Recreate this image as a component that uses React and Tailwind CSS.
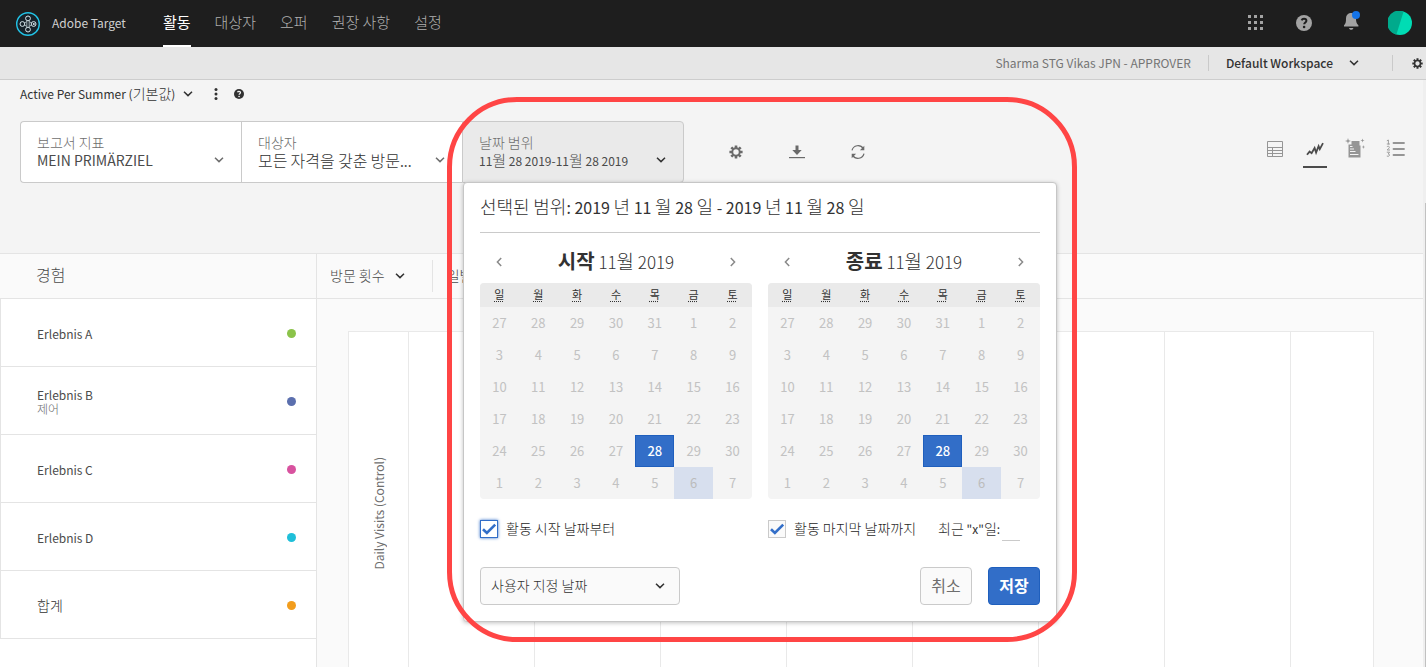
import { useState } from "react";

const NAV = ["활동", "대상자", "오퍼", "권장 사항", "설정"];
const WEEKDAYS = [
  ["일", "일요일"],
  ["월", "월요일"],
  ["화", "화요일"],
  ["수", "수요일"],
  ["목", "목요일"],
  ["금", "금요일"],
  ["토", "토요일"],
];
const WEEKS = [
  [27, 28, 29, 30, 31, 1, 2],
  [3, 4, 5, 6, 7, 8, 9],
  [10, 11, 12, 13, 14, 15, 16],
  [17, 18, 19, 20, 21, 22, 23],
  [24, 25, 26, 27, 28, 29, 30],
  [1, 2, 3, 4, 5, 6, 7],
];
const EXPERIENCES = [
  { name: "Erlebnis A", dot: "bg-[#8bc34a]" },
  { name: "Erlebnis B", note: "제어", dot: "bg-[#5b6fae]" },
  { name: "Erlebnis C", dot: "bg-[#d8529f]" },
  { name: "Erlebnis D", dot: "bg-[#1fbfd9]" },
  { name: "합계", dot: "bg-[#f29d1d]" },
];

// Sets Hangul runs in their own size and weight next to smaller Latin text.
function Mixed({ text, hangul }) {
  return (
    <span>
      {text.split(/([가-힣]+)/).map((part, i) =>
        i % 2 === 1 ? (
          <span key={i} className={hangul}>
            {part}
          </span>
        ) : (
          part
        ),
      )}
    </span>
  );
}

function Chevron({ className = "" }) {
  return (
    <svg viewBox="0 0 10 6" className={`h-[6px] w-[10px] shrink-0 ${className}`} fill="none" stroke="currentColor" strokeWidth="1.5" aria-hidden="true">
      <path d="M1 0.8 5 4.6 9 0.8" />
    </svg>
  );
}

function Gear({ className = "" }) {
  return (
    <svg viewBox="0 0 14 14" className={`shrink-0 ${className}`} aria-hidden="true">
      <path
        d="M7 0.4V3M7 11v2.6M0.4 7H3M11 7h2.6M2.3 2.3l1.9 1.9M9.8 9.8l1.9 1.9M2.3 11.7l1.9-1.9M9.8 4.2l1.9-1.9"
        stroke="currentColor"
        strokeWidth="2.6"
      />
      <circle cx="7" cy="7" r="3.7" fill="none" stroke="currentColor" strokeWidth="1.9" />
    </svg>
  );
}

function Help({ className = "", mark }) {
  return (
    <svg viewBox="0 0 16 16" className={`shrink-0 ${className}`} aria-hidden="true">
      <circle cx="8" cy="8" r="8" fill="currentColor" />
      <path d="M5.6 5.3C6 4.2 6.9 3.7 8 3.7c1.4 0 2.4.8 2.4 2 0 1.7-2.2 1.8-2.2 3.6" fill="none" stroke={mark} strokeWidth="2" />
      <circle cx="8.1" cy="12" r="1.3" fill={mark} />
    </svg>
  );
}

function Logo() {
  return (
    <svg viewBox="0 0 24 24" className="size-6 shrink-0" fill="none" aria-hidden="true">
      <circle cx="12" cy="12" r="11.3" fill="#16222a" stroke="#22c3e6" strokeWidth="1.4" />
      <g stroke="#d7e6ec" strokeWidth="1">
        <circle cx="12" cy="6.4" r="2.4" />
        <circle cx="12" cy="17.6" r="2.4" />
        <circle cx="6.4" cy="12" r="2.4" />
        <circle cx="17.6" cy="12" r="2.4" />
        <path d="M10.8 8.8v6.4M13.2 8.8v6.4M8.6 10.8l2-1M8.6 13.2l2 1M15.4 10.800l-2-1M15.400 13.200l-2 1" strokeWidth="0.7" />
      </g>
      <circle cx="17.8" cy="12" r="1" fill="#d7e6ec" />
    </svg>
  );
}

function TopBar() {
  return (
    <header className="flex h-[47px] items-center justify-between bg-[#1e1e1e] pr-[14px] pl-4">
      <div className="flex h-full items-center">
        <Logo />
        <span className="ml-3 w-20 pb-[2px] text-[12px] whitespace-nowrap text-[#d0d0d0]">Adobe Target</span>
        <nav className="ml-[31px] flex h-full gap-6 text-[15px]">
          {NAV.map((item, i) => (
            <a
              key={item}
              href="#"
              className={
                i === 0
                  ? "flex items-center border-b-2 border-white text-white"
                  : "flex items-center border-b-2 border-transparent font-light text-[#b0b0b0]"
              }
            >
              {item}
            </a>
          ))}
        </nav>
      </div>
      <div className="flex items-center pb-[2px] text-[#a3a3a3]">
        <button type="button" aria-label="앱 전환">
          <svg viewBox="0 0 16 16" className="size-4" fill="currentColor" aria-hidden="true">
            {[0, 6, 12].map((y) => [0, 6, 12].map((x) => <rect key={`${x}-${y}`} x={x} y={y} width="3" height="3" />))}
          </svg>
        </button>
        <button type="button" aria-label="도움말" className="ml-8">
          <Help className="size-4" mark="#1e1e1e" />
        </button>
        <button type="button" aria-label="알림" className="ml-8 pb-1">
          <svg viewBox="0 0 18 20" className="h-5 w-[18px]" aria-hidden="true">
            <path d="M6 2h2c3 .6 4 2.600 4 5.600 0 3.600.6 5 2.400 6.600v1.400H0v-1.400C1.800 12.600 2 11.200 2 7.600c0-3 1.400-5 4-5.600z" fill="currentColor" />
            <path d="M5 17h4.400c-.2 1.200-1 1.800-2.200 1.800S5.200 18.200 5 17z" fill="currentColor" />
            <circle cx="12" cy="4" r="4" fill="#1473e6" />
          </svg>
        </button>
        <button type="button" aria-label="프로필" className="ml-[26px]">
          <svg viewBox="0 0 24 24" className="size-6" aria-hidden="true">
            <circle cx="12" cy="12" r="12" fill="#00dcb4" />
            <path d="M15.600 0.600A12 12 0 1 0 8.400 23.400z" fill="#00aa8c" />
          </svg>
        </button>
      </div>
    </header>
  );
}

function WorkspaceBar() {
  return (
    <div className="flex h-[33px] items-center justify-end border-b border-[#cdcdcd] bg-[#e6e6e6] pr-[3px]">
      <span className="text-[12px] text-[#747474]">Sharma STG Vikas JPN - APPROVER</span>
      <span className="mx-[17px] h-4 w-px bg-[#cacaca]" />
      <button type="button" className="flex items-center gap-4 text-[12px] font-medium text-[#323232]">
        Default Workspace
        <Chevron />
      </button>
      <span className="mr-[19px] ml-[33px] h-4 w-px bg-[#cacaca]" />
      <button type="button" aria-label="설정" className="text-[#323232]">
        <Gear className="size-[11px]" />
      </button>
    </div>
  );
}

function Calendar({ title }) {
  return (
    <section className="min-w-0 flex-1">
      <div className="flex h-[50px] items-center justify-between px-[14px] pt-2">
        <button type="button" aria-label={`${title} 이전 달`} className="text-[#8a8a8a]">
          <Chevron className="rotate-90" />
        </button>
        <h3 className="pb-[2px] text-[17px] leading-6 font-light text-[#323232]">
          <strong className="text-[20px] font-bold">{title}</strong> <Mixed text="11월 2019" hangul="text-[19px]" />
        </h3>
        <button type="button" aria-label={`${title} 다음 달`} className="text-[#8a8a8a]">
          <Chevron className="-rotate-90" />
        </button>
      </div>
      <table className="w-full table-fixed border-separate border-spacing-0 overflow-hidden rounded bg-[#f4f4f4] text-center">
        <thead>
          <tr className="bg-[#eaeaea]">
            {WEEKDAYS.map(([short, full]) => (
              <th key={short} scope="col" className="h-6 p-0 pb-[2px] align-middle text-[11px] leading-4 font-normal text-[#323232]">
                <abbr title={full} className="underline decoration-dotted underline-offset-2">{short}</abbr>
              </th>
            ))}
          </tr>
        </thead>
        <tbody>
          {WEEKS.map((week, w) => (
            <tr key={w}>
              {week.map((day, d) => {
                const selected = w === 4 && d === 4;
                const today = w === 5 && d === 5;
                return (
                  <td key={d} className="h-8 p-0">
                    <button
                      type="button"
                      className={
                        selected
                          ? "block h-8 w-full border border-[#1f5fbd] bg-[#326ec8] text-[13px] leading-[30px] font-medium text-white"
                          : today
                            ? "block h-8 w-full bg-[#d7dfee] text-[13px] leading-8 text-[#bcbcbc]"
                            : "block h-8 w-full text-[13px] leading-8 text-[#c2c2c2]"
                      }
                    >
                      {day}
                    </button>
                  </td>
                );
              })}
            </tr>
          ))}
        </tbody>
      </table>
    </section>
  );
}

function CheckOption({ label, focused }) {
  const [checked, setChecked] = useState(true);
  return (
    <label className="flex items-center gap-2 text-[14px] leading-5 font-light text-[#1e1e1e]">
      <span className="relative flex size-[18px]">
        <input
          type="checkbox"
          checked={checked}
          onChange={(e) => setChecked(e.target.checked)}
          className={
            focused
              ? "peer size-[18px] appearance-none border border-[#326ec8] bg-white shadow-[0_0_3px_#326ec8]"
              : "peer size-[18px] appearance-none border border-[#cacaca] bg-[#fafafa]"
          }
        />
        <svg viewBox="0 0 18 18" className="pointer-events-none absolute inset-0 hidden size-[18px] peer-checked:block" fill="none" stroke="#326ec8" strokeWidth="2.6" aria-hidden="true">
          <path d="M3 9.200 6.900 13 15.200 4.600" />
        </svg>
      </span>
      <span className="pb-[2px]">{label}</span>
    </label>
  );
}

function DatePopover() {
  return (
    <div className="absolute top-[61px] left-px z-10 w-[594px] rounded border border-[#c6c6c6] bg-white px-4 pb-4 shadow-[0_1px_4px_rgba(0,0,0,0.25)]">
      <h2 className="flex h-[50px] items-center border-b border-[#cacaca] pb-[2px] text-[16px] leading-6 whitespace-nowrap text-[#323232]">
        <Mixed text="선택된 범위: 2019 년 11 월 28 일 - 2019 년 11 월 28 일" hangul="text-[18px] font-light" />
      </h2>
      <div className="flex gap-4">
        <Calendar title="시작" />
        <Calendar title="종료" />
      </div>
      <div className="mt-5 flex h-[20px] gap-4">
        <div className="flex flex-1 items-center">
          <CheckOption label="활동 시작 날짜부터" focused />
        </div>
        <div className="flex flex-1 items-center whitespace-nowrap">
          <CheckOption label="활동 마지막 날짜까지" />
          <label htmlFor="recent-days" className="ml-[22px] pb-[2px] text-[12px] leading-5 text-[#323232]">
            <Mixed text={'최근 "x"일:'} hangul="text-[14px] font-light" />
          </label>
          <input id="recent-days" type="text" className="ml-[2px] h-6 w-[18px] border-b border-[#cacaca] bg-transparent text-[13px]" />
        </div>
      </div>
      <div className="mt-7 flex items-center">
        <div className="relative w-[200px]">
          <select aria-label="날짜 프리셋" className="h-[38px] w-full appearance-none rounded border border-[#cacaca] bg-[#fafafa] px-[10px] pb-[2px] text-[14px] font-light text-[#323232]">
            <option>사용자 지정 날짜</option>
          </select>
          <Chevron className="pointer-events-none absolute top-4 right-[15px] text-[#323232]" />
        </div>
        <button type="button" className="ml-auto h-[38px] w-[52px] rounded border border-[#cacaca] bg-[#fafafa] pb-[3px] text-[16px] text-[#6e6e6e]">취소</button>
        <button type="button" className="ml-4 h-[38px] w-[52px] rounded border border-[#1f5fbd] bg-[#326ec8] pb-[3px] text-[16px] font-bold text-white">저장</button>
      </div>
    </div>
  );
}

function FilterCard({ label, value, active, size = "text-[14px]", className = "" }) {
  return (
    <button
      type="button"
      className={`flex h-[62px] w-full items-center justify-between pr-[17px] pb-[2px] pl-4 text-left ${active ? "bg-[#eaeaea]" : "bg-white"} ${className}`}
    >
      <span>
        <span className="block text-[14px] leading-[18px] font-light text-[#6e6e6e]">{label}</span>
        <span className={`block leading-[18px] whitespace-nowrap text-[#4b4b4b] ${size}`}>
          <Mixed text={value} hangul={active ? "text-[15px] font-light" : "text-[16px] font-light text-[#323232]"} />
        </span>
      </span>
      <Chevron className={active ? "mt-[17px] text-[#323232]" : "mt-[17px] text-[#6e6e6e]"} />
    </button>
  );
}

function Filters() {
  return (
    <div className="flex h-[62px] w-[664px] shrink-0">
      <div className="w-[221px]">
        <FilterCard label="보고서 지표" value="MEIN PRIMÄRZIEL" className="rounded-l border border-r-0 border-[#cacaca]" />
      </div>
      <div className="w-[221px]">
        <FilterCard label="대상자" value="모든 자격을 갖춘 방문..." className="border border-r-0 border-[#cacaca]" />
      </div>
      <div className="relative w-[222px]">
        <FilterCard active size="text-[12px]" label="날짜 범위" value="11월 28 2019-11월 28 2019" className="rounded-r border border-[#cacaca]" />
        <DatePopover />
        <div className="pointer-events-none absolute -top-6 -left-[15px] z-20 h-[545px] w-[630px] rounded-[70px] border-5 border-[#ff4545]" />
      </div>
    </div>
  );
}

function ReportTools() {
  return (
    <div className="ml-10 flex gap-[37px] text-[#6a6a6a]">
      <button type="button" aria-label="보고서 설정" className="flex size-6 items-center justify-center">
        <Gear className="size-[14px]" />
      </button>
      <button type="button" aria-label="다운로드" className="flex size-6 items-center justify-center">
        <svg viewBox="0 0 16 14" className="h-[14px] w-4" fill="currentColor" aria-hidden="true">
          <path d="M6.500 0.500h3V5h3.200L8 10 3.300 5h3.200z" />
          <rect x="0" y="12" width="16" height="1.2" />
        </svg>
      </button>
      <button type="button" aria-label="새로 고침" className="flex size-6 items-center justify-center">
        <svg viewBox="0 0 16 16" className="size-4" fill="none" stroke="currentColor" strokeWidth="1.2" aria-hidden="true">
          <path d="M2 6.400A6.200 6.200 0 0 1 13.300 4.600M14 9.600A6.200 6.200 0 0 1 2.700 11.400" />
          <path d="M14.300 1.800v4.400H9.900zM1.700 14.200V9.800h4.400z" fill="currentColor" stroke="none" />
        </svg>
      </button>
    </div>
  );
}

function ViewSwitch() {
  return (
    <div className="-mr-1 mb-1 ml-auto flex gap-4 text-[#959595]">
      <button type="button" aria-label="표" className="flex h-9 w-6 items-start justify-center pt-[9px]">
        <svg viewBox="0 0 16 16" className="size-4" fill="none" stroke="currentColor" aria-hidden="true">
          <path d="M0.500 0.500h15v15H0.500zM0.500 6.500h15M0.500 9.500h15M0.500 12.500h15M5.500 6.500v9" />
        </svg>
      </button>
      <button type="button" aria-label="그래프" className="flex h-9 w-6 items-start justify-center border-b-2 border-[#4b4b4b] pt-[10px] text-[#4b4b4b]">
        <svg viewBox="0 0 18 14" className="h-[14px] w-[18px]" fill="none" stroke="currentColor" strokeWidth="1.8" aria-hidden="true">
          <path d="M1 12.800 3.600 9.600l2 1.600L8.600 6l1.500 4.600L12.600 4.200l1.200 3L17 1.200" />
        </svg>
      </button>
      <button type="button" aria-label="통찰" className="flex h-9 w-6 items-start justify-center pt-[6px]">
        <svg viewBox="0 0 20 20" className="size-5" aria-hidden="true">
          <path d="M3.500 6.500h3V3H14.500v4.500h1V19.500h-12z" fill="currentColor" />
          <path d="M5 8.500h2.500M5 11h4M5 13.500h5.500M5 16.500h8.500" stroke="#f4f4f4" strokeWidth="1.2" />
          <path d="M3 0l.7 2.300L6 3l-2.300.7L3 6l-.7-2.300L0 3l2.300-.7zM17.500 0.500l.5 1.500 1.500.5-1.500.5-.5 1.500-.5-1.500-1.500-.5 1.500-.5zM18.500 7l.4 1.600 1.100.4-1.100.4-.4 1.600-.4-1.600-1.400-.4 1.400-.4z" fill="currentColor" />
        </svg>
      </button>
      <button type="button" aria-label="목록" className="flex h-9 w-6 items-start justify-center pt-[7px]">
        <svg viewBox="0 0 19 19" className="size-[19px]" fill="none" stroke="currentColor" strokeLinecap="round" aria-hidden="true">
          <path d="M7.500 4H18M7.500 10H18M7.500 16H18" strokeWidth="1.8" />
          <path d="M1.200 1.600 2.400 1v4M1.200 5h2.400M1.200 7.500c1.400-.9 3 .3 1.800 1.600L1.200 11h2.400M1.200 13.200h2.400L2.200 15c2.200 0 1.800 3-1 2.200" strokeWidth="0.9" />
        </svg>
      </button>
    </div>
  );
}

function Experiences() {
  return (
    <aside className="w-[317px] shrink-0 border-r border-[#e4e4e4] bg-white">
      <h2 className="flex h-[46px] items-center border-y border-[#e4e4e4] bg-[#fafafa] pb-1 pl-9 text-[16px] font-light text-[#4b4b4b]">경험</h2>
      <ul className="border-l border-[#e4e4e4]">
        {EXPERIENCES.map((e) => (
          <li key={e.name} className="flex h-[68px] items-center justify-between border-b border-[#e4e4e4] pt-px pr-5 pl-9">
            <span>
              <span className="block text-[12px] leading-[15px] text-[#4b4b4b]">
                <Mixed text={e.name} hangul="text-[14px] font-light text-[#323232]" />
              </span>
              {e.note && <span className="block text-[12px] leading-[14px] font-light text-[#6e6e6e]">{e.note}</span>}
            </span>
            <span className={`size-[9px] rounded-full ${e.dot}`} />
          </li>
        ))}
      </ul>
    </aside>
  );
}

function Chart() {
  return (
    <section className="flex min-w-0 flex-1 flex-col bg-[#fafafa]">
      <div className="flex h-[46px] items-center border-y border-[#e4e4e4] pl-[13px] text-[14px] font-light text-[#4b4b4b]">
        <button type="button" className="flex items-center gap-[10px]">
          <span className="pb-[2px]">방문 횟수</span>
          <Chevron className="text-[#323232]" />
        </button>
        <span className="mr-[14px] ml-[27px] h-8 w-px bg-[#e4e4e4]" />
        <button type="button" className="pb-[2px]">일별</button>
      </div>
      <div className="mt-8 mr-[49px] ml-[31px] flex flex-1 border border-b-0 border-[#e9e9e9] bg-white">
        <div className="flex w-[60px] items-center justify-center border-r border-[#e9e9e9] pt-7">
          <span className="rotate-180 text-[12px] whitespace-nowrap text-[#6e6e6e] [writing-mode:vertical-rl]">Daily Visits (Control)</span>
        </div>
        {[1, 2, 3, 4, 5, 6, 7].map((n) => (
          <div key={n} className="flex-[126] border-r border-[#e9e9e9]" />
        ))}
        <div className="flex-[83]" />
      </div>
    </section>
  );
}

export default function App() {
  return (
    <div className="flex min-h-screen flex-col bg-[#f4f4f4] font-['Noto_Sans_CJK_KR',sans-serif]">
      <TopBar />
      <WorkspaceBar />
      <div className="flex flex-1">
        <main className="flex min-w-0 flex-1 flex-col">
          <div className="h-[173px] shrink-0 px-5">
            <div className="flex h-7 items-center text-[#323232]">
              <button type="button" className="flex items-center gap-2 text-[12px] leading-5">
                <span className="pb-[2px]">
                  <Mixed text="Active Per Summer (기본값)" hangul="text-[14px] font-light" />
                </span>
                <Chevron />
              </button>
              <button type="button" aria-label="더 보기" className="ml-[21px]">
                <svg viewBox="0 0 4 12" className="h-3 w-1" fill="currentColor" aria-hidden="true">
                  <circle cx="2" cy="1.5" r="1.5" />
                  <circle cx="2" cy="6" r="1.5" />
                  <circle cx="2" cy="10.5" r="1.5" />
                </svg>
              </button>
              <button type="button" aria-label="도움말" className="ml-4">
                <Help className="size-[10px]" mark="#f4f4f4" />
              </button>
            </div>
            <div className="mt-[13px] flex items-center">
              <Filters />
              <ReportTools />
              <ViewSwitch />
            </div>
          </div>
          <div className="flex flex-1">
            <Experiences />
            <Chart />
          </div>
        </main>
        <div className="flex w-[3px] flex-col bg-[#efefef] pt-[123px]">
          <div className="ml-[2px] flex-1 bg-[#c1c1c1]" />
        </div>
      </div>
    </div>
  );
}
